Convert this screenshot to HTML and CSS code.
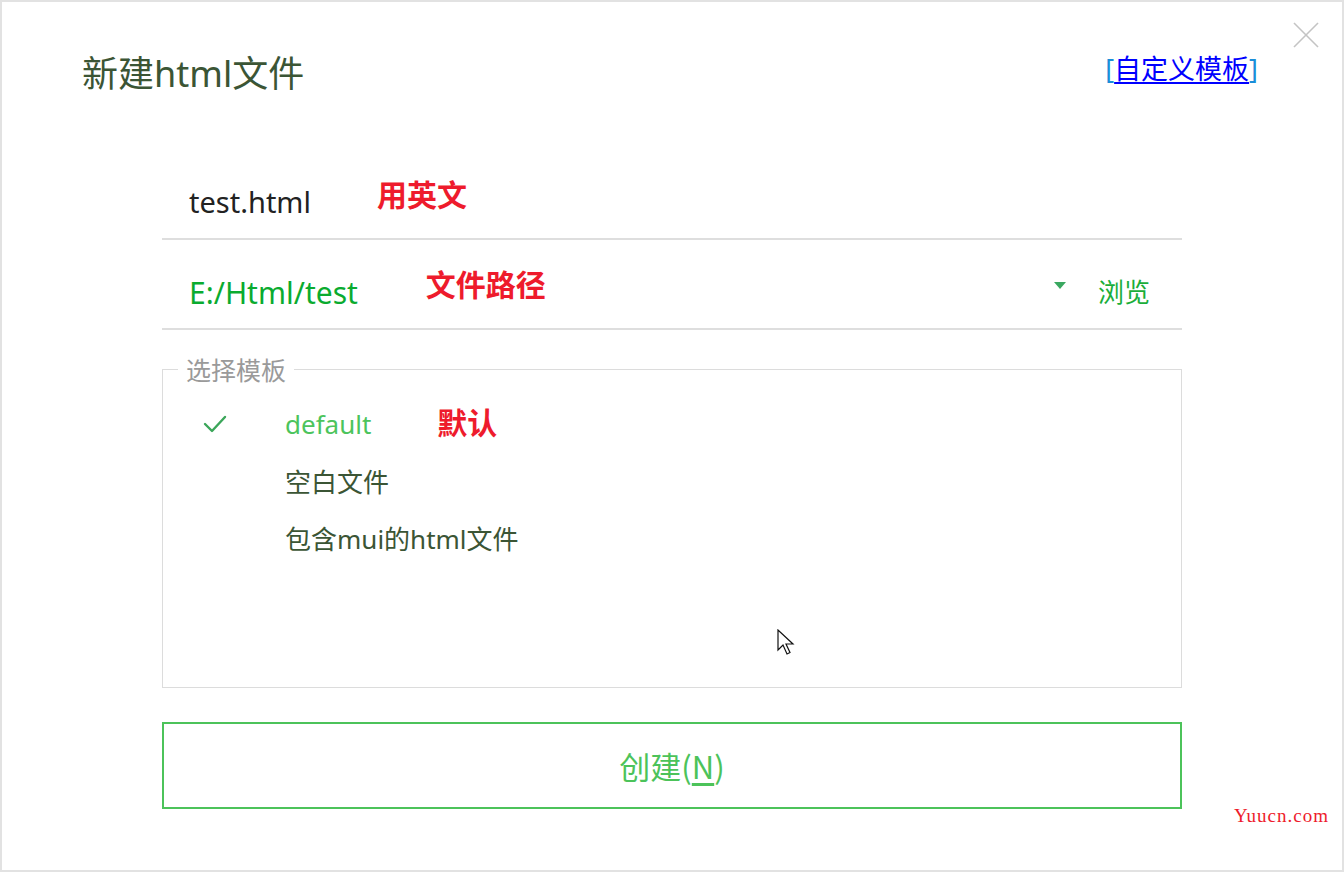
FILE: index.html
```html
<!DOCTYPE html>
<html lang="zh-CN">
<head>
    <meta charset="UTF-8">
    <meta name="viewport" content="width=device-width, initial-scale=1.0">
    <title>新建html文件</title>
    <link rel="stylesheet" href="styles.css">
</head>
<body>
    <div class="dialog">
        <button class="close-button" aria-label="关闭">
            <svg width="28" height="28" viewBox="0 0 28 28" fill="none" stroke="currentColor" stroke-width="1.6">
                <line x1="2" y1="2" x2="26" y2="26" />
                <line x1="26" y1="2" x2="2" y2="26" />
            </svg>
        </button>

        <div class="dialog-header">
            <h1 class="dialog-title">新建html文件</h1>
            <span class="template-link"><span class="bracket">[</span><a href="#">自定义模板</a><span class="bracket">]</span></span>
        </div>

        <div class="dialog-form">
            <div class="field-row">
                <span class="field-value">test.html</span>
                <span class="note note-name">用英文</span>
            </div>

            <div class="field-row">
                <span class="field-value path">E:/Html/test</span>
                <span class="note note-path">文件路径</span>
                <span class="dropdown-arrow"></span>
                <span class="browse">浏览</span>
            </div>

            <fieldset class="template-box">
                <legend>选择模板</legend>
                <ul class="template-list">
                    <li class="template-item selected">
                        <span class="check">
                            <svg width="24" height="20" viewBox="0 0 24 20" fill="none" stroke="currentColor" stroke-width="2.4" stroke-linecap="round" stroke-linejoin="round">
                                <polyline points="2 10 9 17 22 3" />
                            </svg>
                        </span>
                        <span class="template-name">default</span>
                        <span class="note note-default">默认</span>
                    </li>
                    <li class="template-item">
                        <span class="check"></span>
                        <span class="template-name">空白文件</span>
                    </li>
                    <li class="template-item">
                        <span class="check"></span>
                        <span class="template-name">包含mui的html文件</span>
                    </li>
                </ul>
            </fieldset>

            <button class="create-button">创建(<u>N</u>)</button>
        </div>

        <svg class="cursor" width="20" height="28" viewBox="0 0 20 28">
            <path d="M1 1 L1 21 L6 16 L10 25 L13 23.5 L9 15 L16 15 Z" fill="#fff" stroke="#111" stroke-width="1.2" stroke-linejoin="miter" />
        </svg>

        <span class="watermark">Yuucn.com</span>
    </div>
</body>
</html>
```

FILE: styles.css
```css
* {
    box-sizing: border-box;
}

body {
    margin: 0;
    background-color: #ffffff;
    font-family: "Noto Sans", "Noto Sans CJK SC", sans-serif;
}

.dialog {
    position: relative;
    width: 1344px;
    height: 872px;
    border: 2px solid #e2e2e2;
    background-color: #ffffff;
}

.close-button {
    position: absolute;
    top: 19px;
    right: 22px;
    padding: 0;
    border: none;
    background: none;
    color: #c4c4c4;
    cursor: pointer;
}

.dialog-header {
    display: flex;
    justify-content: space-between;
    align-items: flex-start;
    padding: 48px 84px 0 80px;
    height: 148px;
}

.dialog-title {
    margin: 0;
    font-size: 36px;
    font-weight: normal;
    line-height: 48px;
    color: #3b5535;
}

.template-link {
    font-size: 27px;
    line-height: 38px;
}

.template-link .bracket {
    color: #1a8ed8;
}

.template-link a {
    color: #0000ff;
    text-decoration: underline;
    text-underline-offset: 3px;
}

.dialog-form {
    margin-left: 160px;
    width: 1020px;
}

.field-row {
    display: flex;
    align-items: center;
    height: 90px;
    padding: 0 32px 0 27px;
    border-bottom: 2px solid #dedede;
}

.field-value {
    font-size: 29px;
    color: #222222;
    margin-top: 14px;
}

.field-value.path {
    font-size: 30px;
    color: #0aab2f;
    margin-top: 16px;
}

.note {
    font-size: 30px;
    font-weight: bold;
    color: #ee1b2c;
    font-family: "Noto Sans CJK SC", sans-serif;
}

.note-name {
    margin-left: 66px;
    margin-top: -2px;
}

.note-path {
    margin-left: 68px;
    margin-top: -2px;
}

.dropdown-arrow {
    margin-left: auto;
    margin-top: 2px;
    width: 0;
    height: 0;
    border-left: 6px solid transparent;
    border-right: 6px solid transparent;
    border-top: 7px solid #3aa860;
}

.browse {
    margin-left: 32px;
    margin-top: 12px;
    font-size: 26px;
    color: #1aae3a;
    font-family: "Noto Sans CJK SC", sans-serif;
}

.template-box {
    margin: 26px 0 0 0;
    padding: 0;
    height: 332px;
    border: 1px solid #dcdcdc;
    min-width: 0;
}

.template-box legend {
    margin-left: 15px;
    padding: 0 8px;
    font-size: 25px;
    line-height: 26px;
    color: #9a9a9a;
    font-family: "Noto Sans CJK SC", sans-serif;
}

.template-list {
    list-style: none;
    margin: 0;
    padding: 13px 0 0 0;
}

.template-item {
    display: flex;
    align-items: center;
    height: 57px;
}

.check {
    display: flex;
    width: 122px;
    padding-left: 40px;
    color: #3ba65a;
}

.template-name {
    font-size: 26px;
    color: #3b5535;
}

.template-item.selected .template-name {
    color: #4cc45c;
}

.note-default {
    margin-left: 66px;
    margin-top: -6px;
}

.create-button {
    display: block;
    width: 100%;
    height: 87px;
    margin-top: 34px;
    border: 2px solid #4cc35a;
    background-color: #ffffff;
    color: #4cc35a;
    font-family: "Noto Sans CJK SC", sans-serif;
    font-size: 31px;
    cursor: pointer;
}

.create-button u {
    text-underline-offset: 4px;
}

.cursor {
    position: absolute;
    left: 775px;
    top: 627px;
}

.watermark {
    position: absolute;
    left: 1232px;
    top: 803px;
    font-family: "Liberation Serif", serif;
    font-size: 19px;
    letter-spacing: 1px;
    color: #ee1b2c;
}
```
